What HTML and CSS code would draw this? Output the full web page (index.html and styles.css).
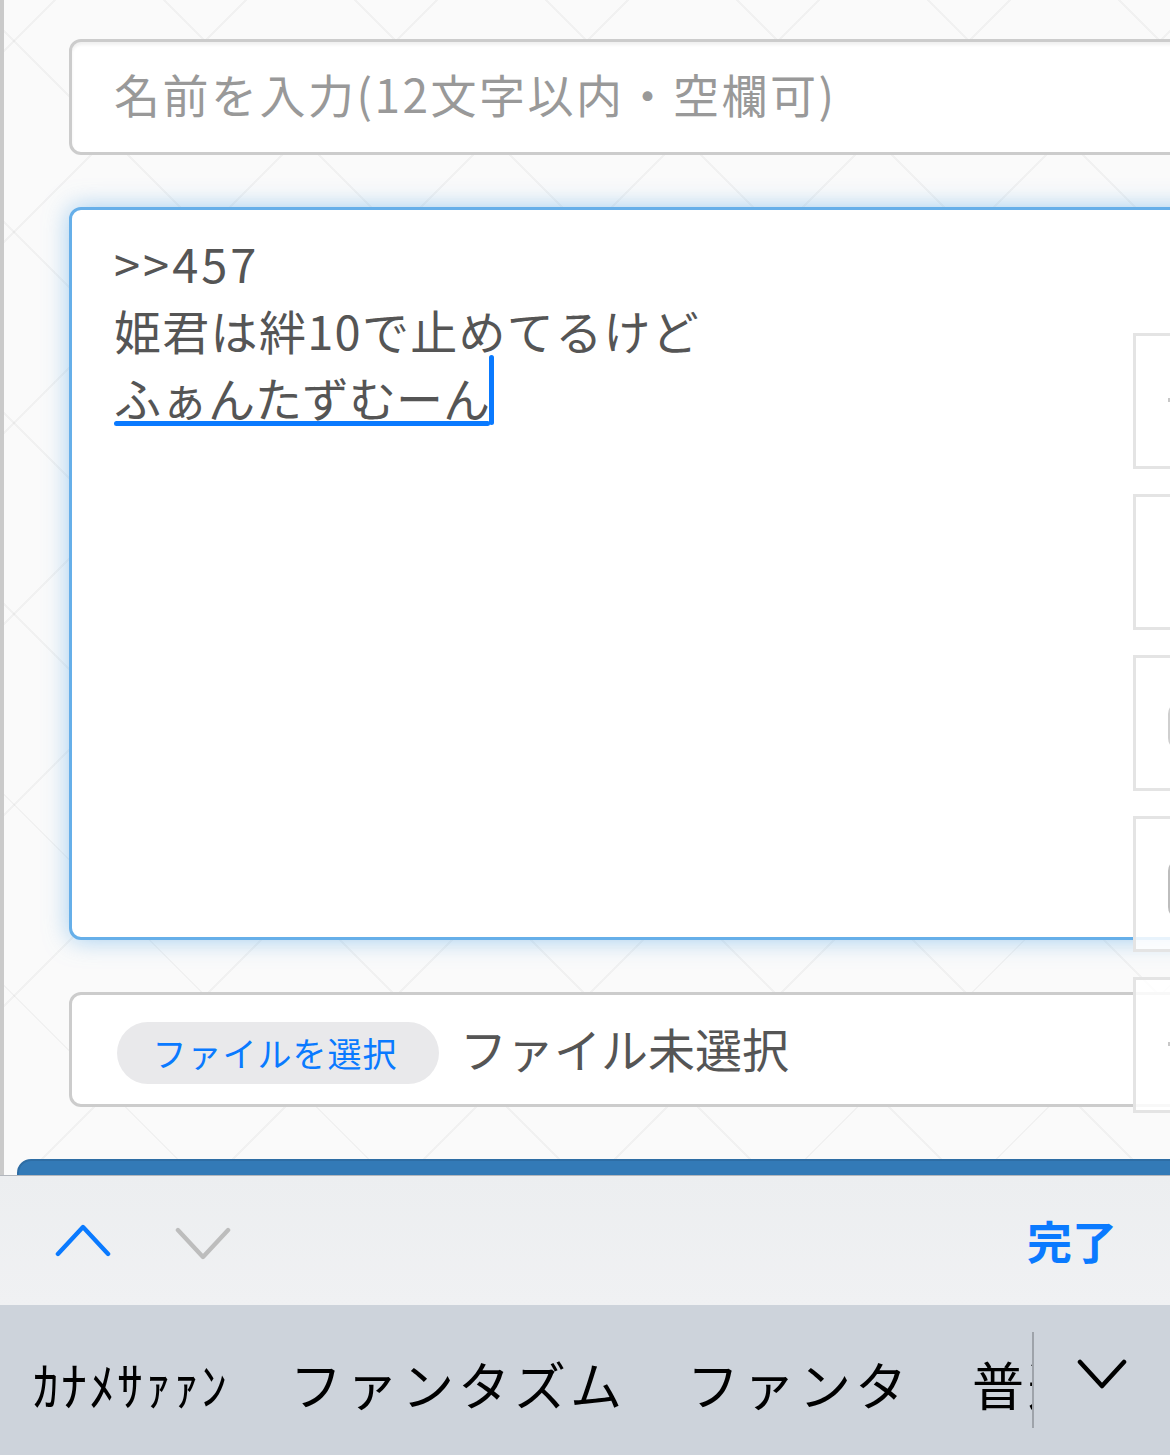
FILE: index.html
```html
<!DOCTYPE html>
<html lang="ja">
<head>
  <meta charset="UTF-8" />
  <meta name="viewport" content="width=device-width, initial-scale=1.0"/>
  <title>書き込み</title>
  <link rel="stylesheet" href="styles.css">
</head>
<body>

  <!-- Post form -->
  <div class="page">
    <div class="form">
      <input class="name-input" type="text" placeholder="名前を入力(12文字以内・空欄可)" />

      <div class="message-box">
        <div class="line num">&gt;&gt;457</div>
        <div class="line wide">姫君は絆10で止めてるけど</div>
        <div class="line"><span class="marked">ふぁんたずむーん<span class="caret"></span></span></div>
      </div>

      <div class="file-box">
        <span class="file-btn">ファイルを選択</span>
        <span class="file-none">ファイル未選択</span>
      </div>

      <div class="submit-btn"></div>
    </div>

    <!-- side tool buttons (cut off at the right edge) -->
    <div class="side-tools">
      <div class="tool"><span class="tool-mark dash"></span></div>
      <div class="tool"></div>
      <div class="tool"><span class="tool-mark paren"></span></div>
      <div class="tool"><span class="tool-mark paren big"></span></div>
      <div class="tool"><span class="tool-mark dash"></span></div>
    </div>
  </div>

  <!-- Keyboard accessory bar -->
  <div class="kb-toolbar">
    <svg class="chev" viewBox="0 0 58 34"><path d="M3 31 L29 3 L55 31" stroke="#0a7aff"/></svg>
    <svg class="chev down" viewBox="0 0 58 34"><path d="M3 3 L29 31 L55 3" stroke="#bdbdbd"/></svg>
    <span class="done">完了</span>
  </div>

  <!-- Conversion candidates -->
  <div class="kb-candidates">
    <div class="cand-list">
      <span class="cand half">ｶﾅﾒｻｧｧﾝ</span>
      <span class="cand">ファンタズム</span>
      <span class="cand">ファンタ</span>
      <span class="cand">普通</span>
    </div>
    <div class="cand-more">
      <svg viewBox="0 0 50 32"><path d="M3 4 L25 28 L47 4"/></svg>
    </div>
  </div>

</body>
</html>
```

FILE: styles.css
```css
body {
  margin: 0;
  width: 1170px;
  height: 1455px;
  overflow: hidden;
  font-family: "Noto Sans CJK JP", "Noto Sans", sans-serif;
  background-color: #fafafa;
}

.page {
  position: relative;
  height: 1175px;
  overflow: hidden;
  border-left: 4px solid #cacaca;
  background-color: #fafafa;
  background-image:
    repeating-linear-gradient(45deg, transparent 0 133px, rgba(0,0,0,0.035) 133px 135px),
    repeating-linear-gradient(-45deg, transparent 0 133px, rgba(0,0,0,0.035) 133px 135px);
}

.form {
  display: flex;
  flex-direction: column;
  gap: 52px;
  padding: 39px 0 0 65px;
}

.name-input {
  box-sizing: border-box;
  width: 1150px;
  height: 116px;
  margin: 0;
  padding: 0 42px 8px;
  border: 3px solid #cccccc;
  border-radius: 12px;
  background: #fff;
  box-shadow: inset 0 3px 3px rgba(0,0,0,0.06);
  font-family: inherit;
  font-size: 46px;
  letter-spacing: 2.5px;
  color: #555;
  outline: none;
}

.name-input::placeholder {
  color: #999;
}

.message-box {
  box-sizing: border-box;
  width: 1150px;
  height: 733px;
  padding: 19px 42px;
  border: 3px solid #66afe9;
  border-radius: 12px;
  background: #fff;
  box-shadow: 0 0 24px rgba(102,175,233,0.6);
  font-size: 47px;
  line-height: 67px;
  color: #555;
}

.line.num {
  letter-spacing: 3px;
}

.line.wide {
  letter-spacing: 1.3px;
}

.marked {
  position: relative;
}

.marked::after {
  content: "";
  position: absolute;
  left: 0;
  right: 0;
  bottom: 5px;
  height: 5px;
  border-radius: 3px;
  background: #0a7aff;
}

.caret {
  position: absolute;
  right: -4px;
  top: -7px;
  width: 5px;
  height: 70px;
  border-radius: 3px;
  background: #0a7aff;
}

.file-box {
  box-sizing: border-box;
  width: 1150px;
  height: 115px;
  display: flex;
  align-items: center;
  gap: 21px;
  padding: 6px 0 0 45px;
  border: 3px solid #cccccc;
  border-radius: 12px;
  background: #fff;
}

.file-btn {
  display: flex;
  align-items: center;
  justify-content: center;
  width: 322px;
  height: 62px;
  padding-right: 6px;
  box-sizing: border-box;
  border-radius: 31px;
  background: #e9e9eb;
  color: #0a7aff;
  font-size: 34px;
  letter-spacing: 1px;
}

.file-none {
  font-size: 47px;
  color: #555;
  margin-top: -10px;
}

.submit-btn {
  width: 1200px;
  height: 90px;
  margin-left: -52px;
  border: 2px solid #2e6da4;
  border-radius: 14px;
  background: #337ab7;
}

.side-tools {
  position: absolute;
  left: 1129px;
  top: 333px;
  display: flex;
  flex-direction: column;
  gap: 25px;
}

.tool {
  position: relative;
  box-sizing: border-box;
  width: 80px;
  height: 136px;
  border: 3px solid #e4e4e4;
  background: rgba(255,255,255,0.85);
}

.tool-mark {
  position: absolute;
  left: 32px;
  top: 62px;
  width: 10px;
  height: 4px;
  background: #c8c8c8;
}

.tool-mark.paren {
  top: 44px;
  left: 32px;
  width: 18px;
  height: 40px;
  border: 4px solid #cfcfcf;
  border-radius: 12px;
  background: transparent;
}

.tool-mark.big {
  top: 40px;
  height: 52px;
  border-color: #bdbdbd;
}

/* keyboard */

.kb-toolbar {
  height: 130px;
  display: flex;
  align-items: center;
  gap: 64px;
  padding: 0 53px 0 55px;
  border-top: 1px solid #b3b7bd;
  box-sizing: border-box;
  background: linear-gradient(#eceef0, #f0f1f3);
}

.chev {
  width: 56px;
  height: 33px;
}

.chev.down {
  margin-top: 5px;
}

.chev path {
  fill: none;
  stroke-width: 4.5;
  stroke-linecap: round;
  stroke-linejoin: round;
}

.done {
  margin-left: auto;
  color: #0a7aff;
  font-size: 45px;
  font-weight: bold;
}

.kb-candidates {
  height: 150px;
  display: flex;
  align-items: center;
  background: #cdd3db;
}

.cand-list {
  display: flex;
  align-items: center;
  gap: 61px;
  box-sizing: border-box;
  width: 1034px;
  height: 96px;
  padding: 6px 0 0 33px;
  overflow: hidden;
  white-space: nowrap;
  border-right: 2px solid #9ea3aa;
}

.cand {
  font-size: 52px;
  letter-spacing: 4px;
  color: #000;
}

.cand.half {
  letter-spacing: 2px;
}

.cand-more {
  flex: 1;
  display: flex;
  justify-content: center;
  padding-bottom: 12px;
}

.cand-more svg {
  width: 50px;
  height: 32px;
}

.cand-more path {
  fill: none;
  stroke: #000;
  stroke-width: 4.5;
  stroke-linecap: round;
  stroke-linejoin: round;
}
```
